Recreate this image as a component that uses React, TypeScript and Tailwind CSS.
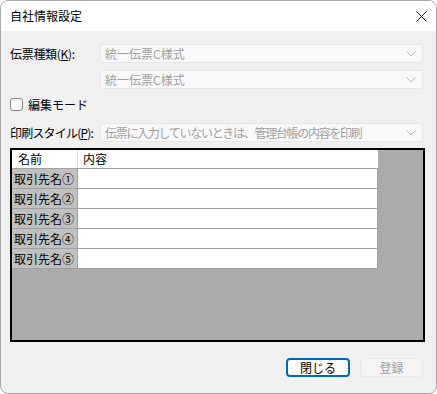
import React from 'react';

const FONT = { fontFamily: '"Noto Sans CJK JP", "Noto Sans", sans-serif' };

function Chevron() {
    return (
        <svg width="10" height="6" viewBox="0 0 10 6" className="shrink-0">
            <path d="M0.5 0.5 L5 5 L9.5 0.5" fill="none" stroke="#b8b8b8" strokeWidth="1" />
        </svg>
    );
}

function Combo({ value, tight }: { value: string; tight?: boolean }) {
    return (
        <div className="flex h-[19px] w-[323px] items-center justify-between rounded-[3px] border border-[#e6e6e6] bg-[#f9f9f9] pl-[4px] pr-[6px]">
            <span
                className={
                    tight
                        ? 'whitespace-nowrap text-[12px] leading-none tracking-[-1.3px] text-[#a0a0a0]'
                        : 'whitespace-nowrap text-[12px] leading-none text-[#a0a0a0]'
                }
            >
                {value}
            </span>
            <Chevron />
        </div>
    );
}

const ROWS = ['取引先名①', '取引先名②', '取引先名③', '取引先名④', '取引先名⑤'];

export default function App() {
    return (
        <div
            style={FONT}
            className="flex h-[394px] w-[437px] flex-col overflow-hidden rounded-[8px] border border-[#a8a8a8] bg-[#f0f0f0] text-black"
        >
            {/* Title bar */}
            <div className="flex h-[30px] shrink-0 items-center justify-between bg-white pl-[9px] pr-[9px]">
                <span className="text-[12px] leading-none">自社情報設定</span>
                <svg width="11" height="11" viewBox="0 0 11 11">
                    <path d="M0.5 0.5 L10.5 10.5 M10.5 0.5 L0.5 10.5" stroke="#1a1a1a" strokeWidth="1" />
                </svg>
            </div>

            <div className="flex flex-col px-[9px] pt-[13px]">
                {/* 伝票種類 */}
                <div className="flex items-center">
                    <span className="w-[90px] whitespace-nowrap text-[12px] leading-none tracking-[-0.3px]">
                        伝票種類(<span className="underline">K</span>):
                    </span>
                    <Combo value="統一伝票C様式" />
                </div>
                <div className="mt-[7px] flex items-center pl-[90px]">
                    <Combo value="統一伝票C様式" />
                </div>

                {/* 編集モード */}
                <div className="mt-[9px] flex h-[13px] items-center gap-[5px]">
                    <div className="h-[13px] w-[13px] rounded-[3px] border border-[#858585] bg-[#fbfbfb]" />
                    <span className="text-[12px] leading-none">編集モード</span>
                </div>

                {/* 印刷スタイル */}
                <div className="mt-[12px] flex items-center">
                    <span className="w-[90px] whitespace-nowrap text-[12px] leading-none tracking-[-0.8px]">
                        印刷スタイル(<span className="underline">P</span>):
                    </span>
                    <Combo value="伝票に入力していないときは、管理台帳の内容を印刷" tight />
                </div>

                {/* Grid */}
                <div className="mt-[6px] h-[194px] w-[415px] border-2 border-black bg-[#ababab]">
                    <div className="flex flex-col">
                        <div className="flex h-[19px] w-[366px] border-b border-[#a0a0a0] bg-white text-[12px] leading-none">
                            <div className="flex w-[66px] items-center border-r border-[#e0e0e0] pl-[6px]">名前</div>
                            <div className="flex flex-1 items-center pl-[5px]">内容</div>
                        </div>
                        {ROWS.map((r) => (
                            <div key={r} className="flex h-[20px] w-[366px] border-b border-r border-[#a0a0a0] text-[12px] leading-none">
                                <div className="flex w-[66px] items-center border-r border-[#a0a0a0] bg-[#c0c0c0] pl-[2px]">{r}</div>
                                <div className="flex-1 bg-white" />
                            </div>
                        ))}
                    </div>
                </div>

                {/* Buttons */}
                <div className="mt-[16px] flex justify-end gap-[10px] pr-[4px]">
                    <button className="flex h-[19px] w-[64px] items-center justify-center rounded-[4px] border-2 border-[#0067c0] bg-[#fdfdfd] text-[12px] leading-none">
                        閉じる
                    </button>
                    <button className="flex h-[19px] w-[63px] items-center justify-center rounded-[4px] border border-[#e8e8e8] bg-[#f5f5f5] text-[12px] leading-none text-[#a0a0a0]">
                        登録
                    </button>
                </div>
            </div>
        </div>
    );
}
